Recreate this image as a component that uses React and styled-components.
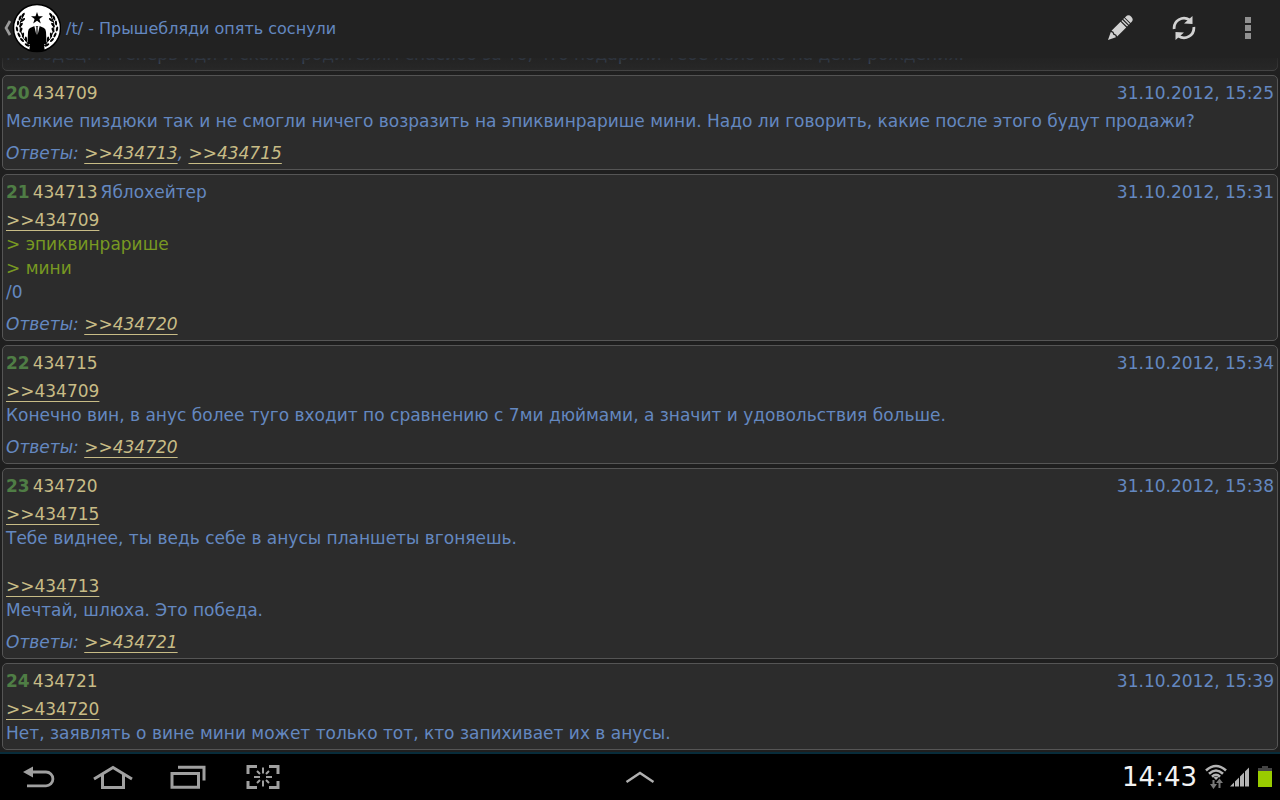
import React from 'react';
import styled, { createGlobalStyle } from 'styled-components';

const GlobalStyle = createGlobalStyle`
  * {
    box-sizing: border-box;
  }

  body {
    margin: 0;
    background: #1f1f1f;
    color: #6488c0;
    font: 17px/24px "DejaVu Sans", "Noto Sans", sans-serif;
  }
`;

const Screen = styled.div`
  display: flex;
  flex-direction: column;
  height: 100vh;
  overflow: hidden;
`;

const ActionBar = styled.header`
  display: flex;
  flex: none;
  align-items: center;
  height: 58px;
  padding: 0 0 2px 3px;
  background: #222222;
`;

const HomeButton = styled.button`
  display: flex;
  align-items: center;
  padding: 0;
  border: 0;
  background: none;
`;

const Title = styled.h1`
  flex: 1;
  margin: 0;
  padding: 2px 0 0 5px;
  font-size: 16px;
  font-weight: 400;
  white-space: nowrap;
`;

const ActionButton = styled.button`
  display: flex;
  align-items: center;
  justify-content: center;
  width: 64px;
  height: 56px;
  padding: 0;
  border: 0;
  background: none;
`;

const Thread = styled.main`
  position: relative;
  display: flex;
  flex: 1;
  flex-direction: column;
  justify-content: flex-end;
  gap: 4px;
  min-height: 0;
  padding: 0 2px 2px;
  overflow: hidden;

  &::before {
    content: "";
    position: absolute;
    top: 0;
    right: 0;
    left: 0;
    height: 18px;
    background: linear-gradient(rgba(34, 34, 34, 0.85), rgba(34, 34, 34, 0.6) 50%, rgba(34, 34, 34, 0));
  }
`;

const PostCard = styled.article`
  flex: none;
  padding: 5px 3px 4px;
  border: 1px solid #555555;
  border-radius: 5px;
  background: #2c2c2c;
`;

const PostHeader = styled.header`
  display: flex;
  gap: 3px;
  margin-bottom: 4px;
`;

const PostIndex = styled.span`
  color: #4f7d45;
  font-weight: 700;
`;

const PostNumber = styled.span`
  color: #c8bc86;
`;

const PostDate = styled.time`
  margin-left: auto;
`;

const Line = styled.div`
  min-height: 24px;
  color: ${({ $quote }) => ($quote ? '#789922' : 'inherit')};
`;

const Replies = styled.footer`
  margin-top: 8px;
  font-style: italic;
`;

const RefLink = styled.a`
  color: #c8bc86;
  text-decoration: underline;
  text-decoration-thickness: 1px;
  text-underline-offset: 4px;
  text-decoration-skip-ink: none;
`;

const NavBar = styled.nav`
  display: grid;
  flex: none;
  grid-template-columns: 1fr auto 1fr;
  align-items: center;
  height: 48px;
  border-top: 2px solid #082c3a;
  background: #000000;
`;

const NavKeys = styled.div`
  display: flex;
`;

const NavButton = styled.button`
  display: flex;
  align-items: center;
  justify-content: center;
  width: 75px;
  height: 46px;
  padding: 0;
  border: 0;
  background: none;
`;

const Status = styled.div`
  display: flex;
  align-items: center;
  justify-content: flex-end;
  gap: 8px;
  padding-right: 8px;
`;

const Radio = styled.div`
  display: flex;
  align-items: center;
  gap: 3px;
`;

const Clock = styled.time`
  color: #f2f2f2;
  font-size: 26px;
  line-height: 46px;
`;

const posts = [
  {
    number: '434708',
    continued: true,
    lines: ['Молодец! А теперь иди и скажи родителям спасибо за то, что подарили тебе яблочко на день рождения.'],
    replies: [],
  },
  {
    index: 20,
    number: '434709',
    date: '31.10.2012, 15:25',
    lines: ['Мелкие пиздюки так и не смогли ничего возразить на эпиквинрарише мини. Надо ли говорить, какие после этого будут продажи?'],
    replies: ['434713', '434715'],
  },
  {
    index: 21,
    number: '434713',
    name: 'Яблохейтер',
    date: '31.10.2012, 15:31',
    lines: ['>>434709', '> эпиквинрарише', '> мини', '/0'],
    replies: ['434720'],
  },
  {
    index: 22,
    number: '434715',
    date: '31.10.2012, 15:34',
    lines: ['>>434709', 'Конечно вин, в анус более туго входит по сравнению с 7ми дюймами, а значит и удовольствия больше.'],
    replies: ['434720'],
  },
  {
    index: 23,
    number: '434720',
    date: '31.10.2012, 15:38',
    lines: ['>>434715', 'Тебе виднее, ты ведь себе в анусы планшеты вгоняешь.', '', '>>434713', 'Мечтай, шлюха. Это победа.'],
    replies: ['434721'],
  },
  {
    index: 24,
    number: '434721',
    date: '31.10.2012, 15:39',
    lines: ['>>434720', 'Нет, заявлять о вине мини может только тот, кто запихивает их в анусы.'],
    replies: [],
  },
];

const PostLine = ({ text }) => {
  if (text.startsWith('>>')) {
    return <Line><RefLink href={`#${text.slice(2)}`}>{text}</RefLink></Line>;
  }
  return <Line $quote={text.startsWith('>')}>{text}</Line>;
};

const Post = ({ post }) => (
  <PostCard id={post.number}>
    {!post.continued && (
      <PostHeader>
        <PostIndex>{post.index}</PostIndex>
        <PostNumber>{post.number}</PostNumber>
        {post.name && <span>{post.name}</span>}
        <PostDate>{post.date}</PostDate>
      </PostHeader>
    )}
    {post.lines.map((text, i) => <PostLine key={i} text={text} />)}
    {post.replies.length > 0 && (
      <Replies>
        Ответы:
        {' '}
        {post.replies.map((number, i) => (
          <React.Fragment key={number}>
            {i > 0 && ', '}
            <RefLink href={`#${number}`}>{`>>${number}`}</RefLink>
          </React.Fragment>
        ))}
      </Replies>
    )}
  </PostCard>
);

const laurelLeaves = [
  [8, 15, 20], [6, 20, 5], [5, 26, -12], [7, 32, -28], [10, 37, -45], [15, 42, -60],
  [11, 17, 50], [9, 22, 40], [9, 27, 25], [11, 32, 8], [14, 36, -8], [11, 12, 35],
];

const Laurel = () => (
  <g fill="#000">
    <path d="M12 11 Q1 27 19 44" fill="none" stroke="#000" strokeWidth="1" />
    {laurelLeaves.map(([x, y, angle]) => (
      <ellipse key={`${x}-${y}`} cx={x} cy={y} rx="1.1" ry="2.6" transform={`rotate(${angle} ${x} ${y})`} />
    ))}
  </g>
);

const LogoIcon = () => (
  <svg width="58" height="50" viewBox="0 0 58 50" aria-hidden="true">
    <path d="M7 18 L3 25 L7 32" fill="none" stroke="#9b9b9b" strokeWidth="2.6" />
    <g transform="translate(9 0)">
      <circle cx="25" cy="25" r="23.5" fill="#fff" stroke="#000" strokeWidth="1.5" />
      <Laurel />
      <g transform="translate(50 0) scale(-1 1)"><Laurel /></g>
      <path d="M25 9 L26.5 13.3 L31 13.3 L27.4 16.1 L28.8 20.6 L25 17.8 L21.2 20.6 L22.6 16.1 L19 13.3 L23.5 13.3 Z" />
      <path d="M22.5 23 L27.5 23 L32 25 Q33.8 26 34 29 L34.6 41 L32 41 L32.6 47 Q25 50 17.4 47 L18 41 L15.4 41 L16 29 Q16.2 26 18 25 Z" />
      <path d="M22.2 22.6 L24.4 23.5 L24.4 32 Z M27.8 22.6 L25.6 23.5 L25.6 32 Z" fill="#fff" />
    </g>
  </svg>
);

const PencilIcon = () => (
  <svg width="28" height="28" viewBox="0 0 28 28" aria-hidden="true">
    <g transform="rotate(45 14 14)" fill="#d2d2d2">
      <path d="M10 2 Q10 -2 14 -2 Q18 -2 18 2 L18 3 L10 3 Z" />
      <path d="M10 4 H18 V5.4 H10 Z M10 6.6 H18 V8 H10 Z" />
      <path d="M10 9.2 H18 V22 Q16 20.5 14 22 Q12 20.5 10 22 Z" />
      <path d="M10.4 23.4 Q12 22 14 23.4 Q16 22 17.6 23.4 L14 31 Z" />
    </g>
  </svg>
);

const RefreshIcon = () => (
  <svg width="24" height="26" viewBox="0 0 24 26" aria-hidden="true">
    <g fill="none" stroke="#d2d2d2" strokeWidth="2.8">
      <path d="M2.2 14 A9.8 9.8 0 0 1 17.5 5" />
      <path d="M21.8 12 A9.8 9.8 0 0 1 6.5 21" />
    </g>
    <path d="M20.5 1 L20.5 9 L12 8.5 Z M3.5 25 L3.5 17 L12 17.5 Z" fill="#d2d2d2" />
  </svg>
);

const MoreIcon = () => (
  <svg width="6" height="22" viewBox="0 0 6 22" aria-hidden="true">
    <path d="M0 0h6v6H0z M0 8h6v6H0z M0 16h6v6H0z" fill="#909090" />
  </svg>
);

const BackIcon = () => (
  <svg width="34" height="24" viewBox="0 0 34 24" aria-hidden="true">
    <path d="M10 7 H25 A6.8 6.8 0 0 1 25 20.8 H6" fill="none" stroke="#a0a0a0" strokeWidth="2.8" />
    <path d="M2 7 L12 1.5 V12.5 Z" fill="#a0a0a0" />
  </svg>
);

const HomeIcon = () => (
  <svg width="40" height="24" viewBox="0 0 40 24" aria-hidden="true">
    <path d="M1 14 L20 2.5 L39 14 M9.5 9 V22.4 H30.5 V9" fill="none" stroke="#a0a0a0" strokeWidth="3" />
  </svg>
);

const RecentIcon = () => (
  <svg width="36" height="24" viewBox="0 0 36 24" aria-hidden="true">
    <path d="M2 8.5 H28.5 V22.2 H2 Z M8 2.2 H34 V15.5" fill="none" stroke="#a0a0a0" strokeWidth="3" />
  </svg>
);

const CaptureIcon = () => (
  <svg width="34" height="24" viewBox="0 0 34 24" aria-hidden="true">
    <path d="M2 9 V1.5 H11 M23 1.5 H32 V9 M32 16 V22.5 H23 M11 22.5 H2 V16" fill="none" stroke="#a0a0a0" strokeWidth="3" />
    <path d="M17 2.5 V8.5 M17 15.5 V21.5 M8 12 H14 M20 12 H26 M11 6 L14 9 M23 6 L20 9 M11 18 L14 15 M23 18 L20 15" stroke="#a0a0a0" strokeWidth="2" />
  </svg>
);

const ExpandIcon = () => (
  <svg width="30" height="14" viewBox="0 0 30 14" aria-hidden="true">
    <path d="M1.5 12 L15 3 L28.5 12" fill="none" stroke="#b0b0b0" strokeWidth="2.4" />
  </svg>
);

const WifiIcon = () => (
  <svg width="22" height="26" viewBox="0 0 22 26" aria-hidden="true">
    <g fill="none" stroke="#b4b4b4" strokeWidth="2.6">
      <path d="M1 6.5 Q11 -2.5 21 6.5" />
      <path d="M4 9.8 Q11 3.2 18 9.8" />
      <path d="M7 12.8 Q11 9 15 12.8" />
    </g>
    <path d="M8.5 13.6 Q11 11.8 13.5 13.6 L11 16 Z" fill="#b4b4b4" />
    <path d="M8.5 16 V21 M14.5 24 V18" fill="none" stroke="#777" strokeWidth="2" />
    <path d="M5 20 H12 L8.5 25 Z M11 19 H18 L14.5 14.5 Z" fill="#777" />
  </svg>
);

const SignalIcon = () => (
  <svg width="20" height="20" viewBox="0 0 20 20" aria-hidden="true">
    <path d="M0 19.5 L4 15.5 V19.5 Z M5 14.5 L9 10.5 V19.5 H5 Z M10 9.5 L14 5.5 V19.5 H10 Z M15 4.5 L19 0.5 V19.5 H15 Z" fill="#b4b4b4" />
  </svg>
);

const BatteryIcon = () => (
  <svg width="14" height="22" viewBox="0 0 14 22" aria-hidden="true">
    <path d="M4 0 H10 V2 H14 V5 H0 V2 H4 Z" fill="#444" />
    <path d="M0 5 H14 V21 H0 Z" fill="#99cc00" />
  </svg>
);

const App = () => (
  <>
    <GlobalStyle />
    <Screen>
      <ActionBar>
        <HomeButton aria-label="Назад"><LogoIcon /></HomeButton>
        <Title>/t/ - Прышебляди опять соснули</Title>
        <ActionButton aria-label="Ответить"><PencilIcon /></ActionButton>
        <ActionButton aria-label="Обновить"><RefreshIcon /></ActionButton>
        <ActionButton aria-label="Меню"><MoreIcon /></ActionButton>
      </ActionBar>
      <Thread>
        {posts.map(post => <Post key={post.number} post={post} />)}
      </Thread>
      <NavBar>
        <NavKeys>
          <NavButton aria-label="Назад"><BackIcon /></NavButton>
          <NavButton aria-label="Домой"><HomeIcon /></NavButton>
          <NavButton aria-label="Недавние"><RecentIcon /></NavButton>
          <NavButton aria-label="Снимок экрана"><CaptureIcon /></NavButton>
        </NavKeys>
        <NavButton aria-label="Развернуть"><ExpandIcon /></NavButton>
        <Status>
          <Clock>14:43</Clock>
          <Radio>
            <WifiIcon />
            <SignalIcon />
          </Radio>
          <BatteryIcon />
        </Status>
      </NavBar>
    </Screen>
  </>
);

export default App;
